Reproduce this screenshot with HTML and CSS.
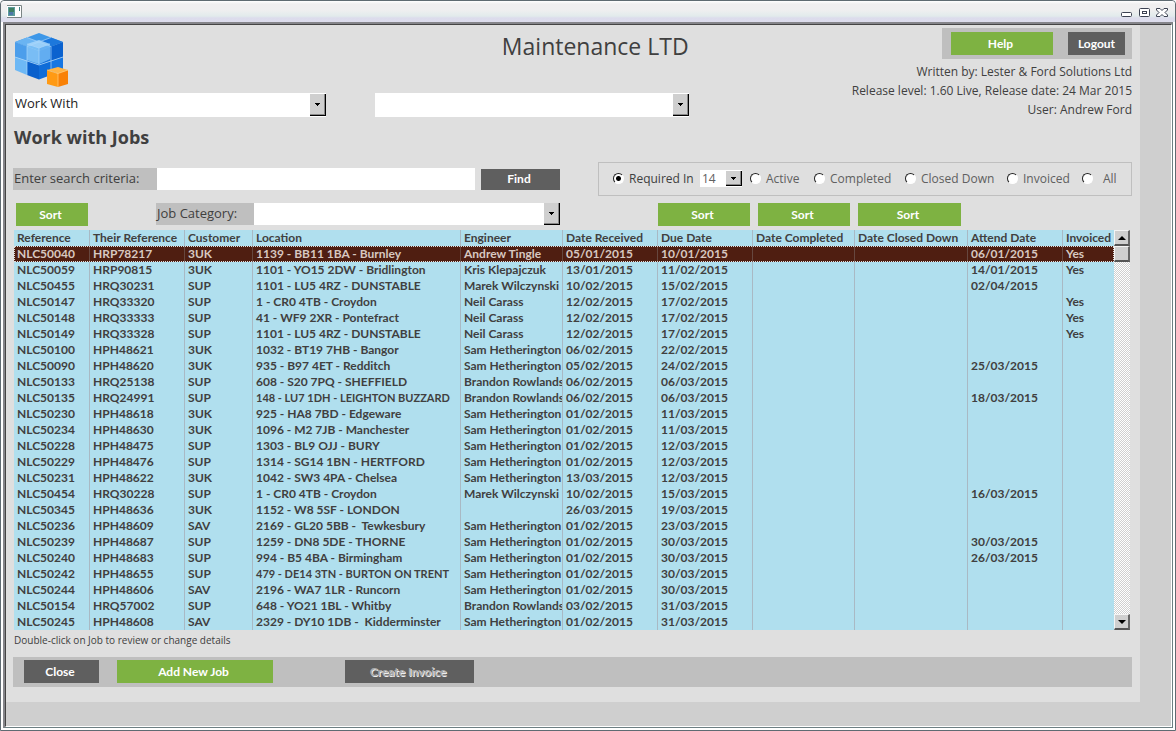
FILE: index.html
```html
<!DOCTYPE html>
<html lang="en">
<head>
    <meta charset="UTF-8">
    <meta name="viewport" content="width=device-width, initial-scale=1.0">
    <title>Maintenance LTD - Work with Jobs</title>
    <link rel="stylesheet" href="styles.css">
</head>
<body>
<div class="window">

    <!-- Title bar -->
    <div class="title-bar">
        <svg class="app-icon" width="15" height="13" viewBox="0 0 15 13">
            <path fill="#fff" d="M0 0h15v13H0z"/>
            <path fill="none" stroke="#7b8585" d="M0 .5h14.5v12H0"/>
            <path fill="#5b9b9b" d="M1 2h7v9H1z"/>
            <path fill="#3f7f62" d="M2 3h5v4H2z"/>
            <path fill="#4d78a8" d="M2 7h4v3H2z"/>
            <path fill="#3d8080" d="M12 2h1v4h-1z"/>
        </svg>
        <div class="window-buttons">
            <button type="button" aria-label="Minimize">
                <svg width="12" height="12" viewBox="0 0 12 12"><rect x="1.5" y="6.5" width="10" height="4" rx="1" fill="#fff" stroke="#3c4252"/></svg>
            </button>
            <button type="button" aria-label="Restore">
                <svg width="12" height="12" viewBox="0 0 12 12"><rect x="1.5" y="2.5" width="10" height="8" rx="1" fill="#fff" stroke="#3c4252"/><rect x="4.5" y="5.5" width="4" height="2" fill="#fff" stroke="#3c4252"/></svg>
            </button>
            <button type="button" aria-label="Close window">
                <svg width="12" height="12" viewBox="0 0 12 12"><path d="M.5 2.5H4l2 2 2-2h3.5V4L9 6.5 11.5 9v1.500H8l-2-2-2 2H.5V9L3 6.500.5 4z" fill="#fff" stroke="#3c4252"/></svg>
            </button>
        </div>
    </div>

    <div class="client">
    <div class="client-inner">
    <main class="form">

        <!-- Header: logo, company name and account details -->
        <header class="header">
            <div class="header-col">
                <svg class="logo" width="56" height="56" viewBox="0 0 56 56">
                    <path fill="#3d97e8" d="M25 1 49 10 25 19 1 10z"/>
                    <path fill="#6ab4f2" d="M13 5.500 25 10l-12 4.500L1 10z"/>
                    <path fill="#1d78dc" d="M37 5.500 49 10l-12 4.500L25 10z"/>
                    <path fill="#4c9eeb" d="M1 10l12 4.500V29L1 25z"/>
                    <path fill="#6db8f5" d="M1 25l12 4v14L1 38z"/>
                    <path fill="#4094e6" d="M13 14.500 25 19v14l-12-4z"/>
                    <path fill="#0a60cc" d="M13 29l12 4v14.500L13 43z"/>
                    <path fill="#0f6cd8" d="M25 33l12-4v14l-12 4.500z"/>
                    <path fill="#1a75dc" d="M25 19l12-4.500V29l-12 4z"/>
                    <path fill="#0b62cf" d="M37 14.500 49 10v15l-12 4z"/>
                    <path fill="#1676e2" d="M37 29l12-4v13l-12 5z"/>
                    <path fill="#8ccbfa" opacity=".75" d="M13 12l12-4 11 4v15l-11 5-12-4z"/>
                    <path fill="#5aa9f0" opacity=".6" d="M25 16l11-4v15l-11 5z"/>
                    <path fill="#b8defb" opacity=".5" d="M13 12l12-4 11 4-11 4z"/>
                    <path fill="none" stroke="#a9d6fa" stroke-width=".7" d="M13 5.500 37 14.500V43M37 5.500l-24 9V43M1 25l12 4 12 4 12-4 12-4M13 12l12 4 11-4M25 16v16"/>
                    <path fill="#f98106" d="M44 41l10-3v14l-10 3z"/>
                    <path fill="#ffb445" d="M44 35l10 3-10 3.500L33 38z"/>
                    <path fill="#ff9a14" d="M33 38l11 3.500V55l-11-3z"/>
                    <path fill="none" stroke="#ffc873" stroke-width=".8" d="M33 38l11 3.500L54 38M44 41.500V55"/>
                </svg>
                <select class="combo" aria-label="Work with">
                    <option>Work With</option>
                </select>
            </div>
            <div class="header-col">
                <h1>Maintenance LTD</h1>
                <select class="combo" aria-label="Option">
                    <option></option>
                </select>
            </div>
            <div class="header-info">
                <div class="account-bar">
                    <button type="button" class="btn green help">Help</button>
                    <button type="button" class="btn dark logout">Logout</button>
                </div>
                <p>Written by: Lester &amp; Ford Solutions Ltd</p>
                <p>Release level: 1.60 Live, Release date: 24 Mar 2015</p>
                <p>User: Andrew Ford</p>
            </div>
        </header>

        <h2>Work with Jobs</h2>

        <!-- Search and status filter -->
        <div class="search-row">
            <label class="field-label search-label" for="search">Enter search criteria:</label>
            <input type="text" id="search" class="search-input">
            <button type="button" class="btn dark find">Find</button>
            <div class="filter" role="radiogroup" aria-label="Job status">
                <label class="required"><input type="radio" name="status" checked>Required In</label>
                <select class="combo days" aria-label="Days">
                    <option>14</option>
                </select>
                <label class="active"><input type="radio" name="status">Active</label>
                <label class="completed"><input type="radio" name="status">Completed</label>
                <label class="closed"><input type="radio" name="status">Closed Down</label>
                <label class="invoiced"><input type="radio" name="status">Invoiced</label>
                <label class="all"><input type="radio" name="status">All</label>
            </div>
        </div>

        <!-- Sort buttons sit over the columns they sort -->
        <div class="sort-row">
            <button type="button" class="btn green sort-reference">Sort</button>
            <div class="category">
                <label class="field-label category-label" for="category">Job Category:</label>
                <select id="category" class="combo">
                    <option></option>
                </select>
            </div>
            <div class="sort-dates">
                <button type="button" class="btn green">Sort</button>
                <button type="button" class="btn green">Sort</button>
                <button type="button" class="btn green wide">Sort</button>
            </div>
        </div>

        <!-- Job list -->
        <div class="job-list">
            <table>
                <colgroup>
                    <col class="c-reference"><col class="c-their"><col class="c-customer"><col class="c-location">
                    <col class="c-engineer"><col class="c-received"><col class="c-due"><col class="c-completed">
                    <col class="c-closed"><col class="c-attend"><col class="c-invoiced">
                </colgroup>
                <thead>
                    <tr><th>Reference</th><th>Their Reference</th><th>Customer</th><th>Location</th><th>Engineer</th><th>Date Received</th><th>Due Date</th><th>Date Completed</th><th>Date Closed Down</th><th>Attend Date</th><th>Invoiced</th></tr>
                </thead>
                <tbody>
                    <tr class="selected"><td>NLC50040</td><td>HRP78217</td><td>3UK</td><td>1139 - BB11 1BA - Burnley</td><td>Andrew Tingle</td><td>05/01/2015</td><td>10/01/2015</td><td></td><td></td><td>06/01/2015</td><td>Yes</td></tr>
                    <tr><td>NLC50059</td><td>HRP90815</td><td>3UK</td><td>1101 - YO15 2DW - Bridlington</td><td>Kris Klepajczuk</td><td>13/01/2015</td><td>11/02/2015</td><td></td><td></td><td>14/01/2015</td><td>Yes</td></tr>
                    <tr><td>NLC50455</td><td>HRQ30231</td><td>SUP</td><td>1101 - LU5 4RZ - DUNSTABLE</td><td>Marek Wilczynski</td><td>10/02/2015</td><td>15/02/2015</td><td></td><td></td><td>02/04/2015</td><td></td></tr>
                    <tr><td>NLC50147</td><td>HRQ33320</td><td>SUP</td><td>1 - CR0 4TB - Croydon</td><td>Neil Carass</td><td>12/02/2015</td><td>17/02/2015</td><td></td><td></td><td></td><td>Yes</td></tr>
                    <tr><td>NLC50148</td><td>HRQ33333</td><td>SUP</td><td>41 - WF9 2XR - Pontefract</td><td>Neil Carass</td><td>12/02/2015</td><td>17/02/2015</td><td></td><td></td><td></td><td>Yes</td></tr>
                    <tr><td>NLC50149</td><td>HRQ33328</td><td>SUP</td><td>1101 - LU5 4RZ - DUNSTABLE</td><td>Neil Carass</td><td>12/02/2015</td><td>17/02/2015</td><td></td><td></td><td></td><td>Yes</td></tr>
                    <tr><td>NLC50100</td><td>HPH48621</td><td>3UK</td><td>1032 - BT19 7HB - Bangor</td><td>Sam Hetherington</td><td>06/02/2015</td><td>22/02/2015</td><td></td><td></td><td></td><td></td></tr>
                    <tr><td>NLC50090</td><td>HPH48620</td><td>3UK</td><td>935 - B97 4ET - Redditch</td><td>Sam Hetherington</td><td>05/02/2015</td><td>24/02/2015</td><td></td><td></td><td>25/03/2015</td><td></td></tr>
                    <tr><td>NLC50133</td><td>HRQ25138</td><td>SUP</td><td>608 - S20 7PQ - SHEFFIELD</td><td>Brandon Rowlands</td><td>06/02/2015</td><td>06/03/2015</td><td></td><td></td><td></td><td></td></tr>
                    <tr><td>NLC50135</td><td>HRQ24991</td><td>SUP</td><td class="long">148 - LU7 1DH - LEIGHTON BUZZARD</td><td>Brandon Rowlands</td><td>06/02/2015</td><td>06/03/2015</td><td></td><td></td><td>18/03/2015</td><td></td></tr>
                    <tr><td>NLC50230</td><td>HPH48618</td><td>3UK</td><td>925 - HA8 7BD - Edgeware</td><td>Sam Hetherington</td><td>01/02/2015</td><td>11/03/2015</td><td></td><td></td><td></td><td></td></tr>
                    <tr><td>NLC50234</td><td>HPH48630</td><td>3UK</td><td>1096 - M2 7JB - Manchester</td><td>Sam Hetherington</td><td>01/02/2015</td><td>11/03/2015</td><td></td><td></td><td></td><td></td></tr>
                    <tr><td>NLC50228</td><td>HPH48475</td><td>SUP</td><td>1303 - BL9 OJJ - BURY</td><td>Sam Hetherington</td><td>01/02/2015</td><td>12/03/2015</td><td></td><td></td><td></td><td></td></tr>
                    <tr><td>NLC50229</td><td>HPH48476</td><td>SUP</td><td>1314 - SG14 1BN - HERTFORD</td><td>Sam Hetherington</td><td>01/02/2015</td><td>12/03/2015</td><td></td><td></td><td></td><td></td></tr>
                    <tr><td>NLC50231</td><td>HPH48622</td><td>3UK</td><td>1042 - SW3 4PA - Chelsea</td><td>Sam Hetherington</td><td>13/03/2015</td><td>12/03/2015</td><td></td><td></td><td></td><td></td></tr>
                    <tr><td>NLC50454</td><td>HRQ30228</td><td>SUP</td><td>1 - CR0 4TB - Croydon</td><td>Marek Wilczynski</td><td>10/02/2015</td><td>15/03/2015</td><td></td><td></td><td>16/03/2015</td><td></td></tr>
                    <tr><td>NLC50345</td><td>HPH48636</td><td>3UK</td><td>1152 - W8 5SF - LONDON</td><td></td><td>26/03/2015</td><td>19/03/2015</td><td></td><td></td><td></td><td></td></tr>
                    <tr><td>NLC50236</td><td>HPH48609</td><td>SAV</td><td>2169 - GL20 5BB -  Tewkesbury</td><td>Sam Hetherington</td><td>01/02/2015</td><td>23/03/2015</td><td></td><td></td><td></td><td></td></tr>
                    <tr><td>NLC50239</td><td>HPH48687</td><td>SUP</td><td>1259 - DN8 5DE - THORNE</td><td>Sam Hetherington</td><td>01/02/2015</td><td>30/03/2015</td><td></td><td></td><td>30/03/2015</td><td></td></tr>
                    <tr><td>NLC50240</td><td>HPH48683</td><td>SUP</td><td>994 - B5 4BA - Birmingham</td><td>Sam Hetherington</td><td>01/02/2015</td><td>30/03/2015</td><td></td><td></td><td>26/03/2015</td><td></td></tr>
                    <tr><td>NLC50242</td><td>HPH48655</td><td>SUP</td><td class="long">479 - DE14 3TN - BURTON ON TRENT</td><td>Sam Hetherington</td><td>01/02/2015</td><td>30/03/2015</td><td></td><td></td><td></td><td></td></tr>
                    <tr><td>NLC50244</td><td>HPH48606</td><td>SAV</td><td>2196 - WA7 1LR - Runcorn</td><td>Sam Hetherington</td><td>01/02/2015</td><td>30/03/2015</td><td></td><td></td><td></td><td></td></tr>
                    <tr><td>NLC50154</td><td>HRQ57002</td><td>SUP</td><td>648 - YO21 1BL - Whitby</td><td>Brandon Rowlands</td><td>03/02/2015</td><td>31/03/2015</td><td></td><td></td><td></td><td></td></tr>
                    <tr><td>NLC50245</td><td>HPH48608</td><td>SAV</td><td>2329 - DY10 1DB -  Kidderminster</td><td>Sam Hetherington</td><td>01/02/2015</td><td>31/03/2015</td><td></td><td></td><td></td><td></td></tr>
                </tbody>
            </table>
            <div class="scrollbar">
                <button type="button" aria-label="Scroll up"><svg width="8" height="4" viewBox="0 0 8 4"><path d="M0 4l4-4 4 4z"/></svg></button>
                <div class="thumb"></div>
                <button type="button" class="down" aria-label="Scroll down"><svg width="8" height="4" viewBox="0 0 8 4"><path d="M0 0l4 4 4-4z"/></svg></button>
            </div>
        </div>
        <p class="hint">Double-click on Job to review or change details</p>

        <!-- Actions -->
        <footer class="actions">
            <button type="button" class="btn dark close">Close</button>
            <button type="button" class="btn green add">Add New Job</button>
            <button type="button" class="btn dark create" disabled>Create Invoice</button>
        </footer>

    </main>
    </div>
    </div>
</div>
</body>
</html>
```
FILE: styles.css
```css
* {
    box-sizing: border-box;
}

body {
    margin: 0;
    font-family: "Open Sans", "Noto Sans", sans-serif;
    font-size: 12px;
    color: #404040;
}

h1, h2, p {
    margin: 0;
}

button, input, select {
    font-family: inherit;
    font-size: inherit;
    margin: 0;
    padding: 0;
    border: none;
    border-radius: 0;
}

/* Window frame */
.window {
    display: flex;
    flex-direction: column;
    min-height: 100vh;
    border: 1px solid #5f6b72;
    border-radius: 4px 4px 0 0;
    background: #fff;
}

.title-bar {
    display: flex;
    justify-content: space-between;
    align-items: center;
    height: 21px;
    padding: 0 7px 0 6px;
    border-radius: 4px 4px 0 0;
    background: linear-gradient(#fff 0, #f0eff0 3px, #efeff0 9px, #e2ebec 15px, #dcdcec 17px, #dddded 21px);
}

.window-buttons {
    display: flex;
    gap: 6px;
}

.window-buttons button {
    display: flex;
    background: none;
}

.client {
    display: flex;
    flex: 1;
    margin: 0 2px 2px;
    border: 1px solid #6d7f83;
    border-width: 2px 1px 1px 2px;
    border-top-color: #85858a;
    border-left-color: #85858a;
}

.client-inner {
    flex: 1;
    padding: 0 31px 24px 0;
    border: 1px solid #fff;
    border-top-color: #444;
    border-left-color: #444;
    background: #cfcfcf;
}

.form {
    padding: 3px 8px 15px 7px;
    background: #dfdfdf;
}

/* Buttons */
.btn {
    height: 23px;
    padding: 0 3px 1px 0;
    color: #fff;
    font-family: Lato, "Open Sans", sans-serif;
    font-weight: bold;
    font-size: 12px;
    text-align: center;
    cursor: pointer;
}

.green {
    background: #7eb242;
}

.dark {
    background: #5f5f5f;
}

.btn:disabled {
    color: #aaa;
    text-shadow: 1px 1px #eee;
    cursor: default;
}

/* Drop-downs with a raised arrow button */
.combo {
    appearance: none;
    width: 100%;
    height: 24px;
    padding: 0 18px 4px 2px;
    color: #222;
    font-size: 13px;
    background: #fff url("data:image/svg+xml,%3Csvg xmlns='http://www.w3.org/2000/svg' width='16' height='22' shape-rendering='crispEdges'%3E%3Cpath fill='%23000' d='M0 0h16v22H0z'/%3E%3Cpath fill='%23888' d='M0 0h15v21H0z'/%3E%3Cpath fill='%23cfcfcf' d='M0 0h14v20H0z'/%3E%3Cpath d='M5 9h5v1H5zM6 10h3v1H6zM7 11h1v1H7z'/%3E%3C/svg%3E") no-repeat right center;
}

/* Header */
.header {
    display: grid;
    grid-template-columns: 28% 28% 1fr;
    column-gap: 49px;
    height: 88px;
}

.header-col {
    display: flex;
    flex-direction: column;
    justify-content: space-between;
    padding-bottom: 2px;
}

.header-col .combo {
    margin-top: auto;
}

.logo {
    display: block;
    flex: none;
    margin: 4px 0 0 1px;
}

h1 {
    padding-top: 2px;
    font-size: 23px;
    line-height: 32px;
    font-weight: normal;
    text-align: right;
}

.header-info {
    line-height: 19px;
    text-align: right;
    white-space: nowrap;
}

.account-bar {
    display: flex;
    align-items: center;
    gap: 15px;
    width: 190px;
    height: 31px;
    margin: 0 0 3px auto;
    padding: 0 7px 0 9px;
    background: #bfbfbf;
}

.help {
    flex: 1;
}

.logout {
    width: 57px;
    padding-right: 0;
}

h2 {
    margin: 9px 1px 0;
    font-size: 18px;
    line-height: 24px;
}

/* Search row */
.search-row {
    display: flex;
    align-items: center;
    height: 34px;
    margin-top: 13px;
}

.field-label {
    height: 22px;
    padding-left: 1px;
    font-size: 13px;
    line-height: 20px;
    background: #bfbfbf;
}

.search-label {
    width: 144px;
}

.search-input {
    flex: 1;
    height: 22px;
    padding: 0 3px;
    background: #fff;
}

.find {
    width: 79px;
    height: 21px;
    margin: 0 38px 0 6px;
}

.filter {
    display: flex;
    align-items: center;
    width: 534px;
    height: 34px;
    padding: 0 14px 2px;
    border: 1px solid #bfbfbf;
}

.filter label {
    display: flex;
    align-items: center;
    gap: 5px;
    color: #606060;
}

.filter .required {
    width: 87px;
    color: #404040;
}

.days {
    width: 42px;
    height: 17px;
    margin-right: 8px;
    padding: 0 16px 0 2px;
    color: #606060;
    font-size: 12px;
    background-image: url("data:image/svg+xml,%3Csvg xmlns='http://www.w3.org/2000/svg' width='16' height='15' shape-rendering='crispEdges'%3E%3Cpath fill='%23000' d='M0 0h16v15H0z'/%3E%3Cpath fill='%23888' d='M0 0h15v14H0z'/%3E%3Cpath fill='%23cfcfcf' d='M0 0h14v13H0z'/%3E%3Cpath d='M5 6h5v1H5zM6 7h3v1H6zM7 8h1v1H7z'/%3E%3C/svg%3E");
}

.filter .active {
    width: 64px;
}

.filter .completed {
    width: 91px;
}

.filter .closed {
    width: 102px;
}

.filter .invoiced {
    width: 75px;
}

.filter .all {
    gap: 10px;
}

input[type="radio"] {
    appearance: none;
    width: 11px;
    height: 11px;
    border: 1px solid #fff;
    border-top-color: #222;
    border-left-color: #222;
    border-radius: 50%;
    background: #fff;
}

input[type="radio"]:checked {
    background: radial-gradient(circle, #000 2px, #fff 3px);
}

/* Sort row */
.sort-row {
    display: flex;
    height: 23px;
    margin: 7px 171px 4px 3px;
}

.sort-reference {
    width: 72px;
}

.category {
    display: flex;
    flex: 1;
    margin: 0 98px 0 68px;
}

.category-label {
    width: 98px;
}

.category .combo {
    flex: 1;
    width: auto;
    height: 22px;
}

.sort-dates {
    display: flex;
    gap: 8px;
}

.sort-dates .btn {
    width: 92px;
}

.sort-dates .wide {
    width: 103px;
}

/* Job list */
.job-list {
    display: flex;
    margin: 0 2px 0 1px;
}

table {
    flex: 1;
    width: 0;
    table-layout: fixed;
    border-collapse: separate;
    border-spacing: 0;
    background: #b0dfee;
}

th, td {
    height: 16px;
    padding: 0 0 0 3px;
    border-right: 1px solid #a9b9c4;
    font-family: Lato, "Open Sans", sans-serif;
    font-size: 12px;
    line-height: 16px;
    font-weight: bold;
    text-align: left;
    white-space: pre;
    overflow: hidden;
}

th:last-child, td:last-child {
    border-right: none;
}

/* Long locations are set smaller so they fit the column */
.long {
    font-size: 11px;
}

.selected td {
    color: #d8c8c0;
    background: #4f1e11;
    border-right-color: #66473f;
}

.selected {
    outline: 1px dotted #ddd;
    outline-offset: -1px;
}

.c-reference { width: 76px; }
.c-their { width: 95px; }
.c-customer { width: 68px; }
.c-engineer { width: 102px; }
.c-received { width: 95px; }
.c-due { width: 95px; }
.c-completed { width: 102px; }
.c-closed { width: 113px; }
.c-attend { width: 95px; }
.c-invoiced { width: 51px; }

.scrollbar {
    display: flex;
    flex-direction: column;
    width: 16px;
    background: repeating-conic-gradient(#d0d0d0 0 25%, #fff 0 50%) 0 0 / 2px 2px;
}

.scrollbar button, .thumb {
    display: flex;
    align-items: center;
    justify-content: center;
    height: 16px;
    border: 1px solid #f4f4f4;
    border-right: 2px solid #666;
    border-bottom: 2px solid #555;
    background: #cfcfcf;
}

.scrollbar .down {
    margin-top: auto;
}

.hint {
    margin: 3px 1px 0;
    font-size: 10px;
    line-height: 15px;
}

/* Bottom actions */
.actions {
    display: flex;
    align-items: center;
    height: 30px;
    margin-top: 9px;
    padding: 0 11px 1px;
    background: #bfbfbf;
}

.close {
    width: 75px;
    margin-right: 18px;
}

.add {
    width: 156px;
    margin-right: 72px;
}

.create {
    width: 129px;
}
```
